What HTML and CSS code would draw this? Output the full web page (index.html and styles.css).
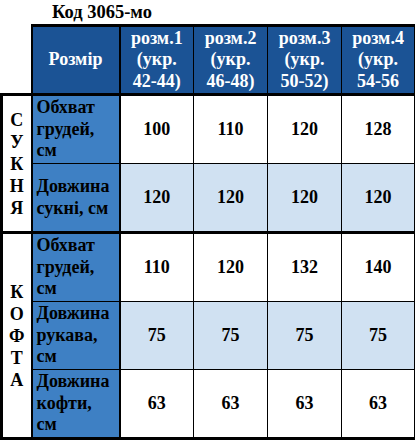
FILE: index.html
```html
<!DOCTYPE html>
<html lang="uk">
<head>
<meta charset="utf-8">
<title>Код 3065-мо</title>
<link rel="stylesheet" href="styles.css">
</head>
<body>
<div class="title">Код 3065-мо</div>
<table class="sizes">
  <colgroup>
    <col class="c-sec">
    <col class="c-lab">
    <col class="c-val">
    <col class="c-val">
    <col class="c-val">
    <col class="c-val">
  </colgroup>
  <tr class="head">
    <td class="corner"></td>
    <th class="h-first">Розмір</th>
    <th>розм.1<br>(укр.<br>42-44)</th>
    <th>розм.2<br>(укр.<br>46-48)</th>
    <th>розм.3<br>(укр.<br>50-52)</th>
    <th class="h-last">розм.4<br>(укр.<br>54-56</th>
  </tr>
  <tr class="grp-top">
    <td class="sec" rowspan="2">С<br>У<br>К<br>Н<br>Я</td>
    <td class="lab">Обхват<br>грудей,<br>см</td>
    <td class="val">100</td>
    <td class="val">110</td>
    <td class="val">120</td>
    <td class="val last">128</td>
  </tr>
  <tr class="alt">
    <td class="lab">Довжина<br>сукні, см</td>
    <td class="val">120</td>
    <td class="val">120</td>
    <td class="val">120</td>
    <td class="val last">120</td>
  </tr>
  <tr class="grp-top">
    <td class="sec sec-bottom" rowspan="3">К<br>О<br>Ф<br>Т<br>А</td>
    <td class="lab">Обхват<br>грудей,<br>см</td>
    <td class="val">110</td>
    <td class="val">120</td>
    <td class="val">132</td>
    <td class="val last">140</td>
  </tr>
  <tr class="alt">
    <td class="lab">Довжина<br>рукава,<br>см</td>
    <td class="val">75</td>
    <td class="val">75</td>
    <td class="val">75</td>
    <td class="val last">75</td>
  </tr>
  <tr class="bottom">
    <td class="lab">Довжина<br>кофти,<br>см</td>
    <td class="val">63</td>
    <td class="val">63</td>
    <td class="val">63</td>
    <td class="val last">63</td>
  </tr>
</table>
</body>
</html>
```

FILE: styles.css
```css
html, body {
  margin: 0;
  padding: 0;
  background: #ffffff;
}

body {
  font-family: "Liberation Serif", "Times New Roman", serif;
  font-weight: bold;
  color: #000000;
  font-size: 18px;
}

.title {
  height: 24px;
  line-height: 24px;
  padding-left: 52px;
  font-size: 18.5px;
}

.sizes {
  border-collapse: collapse;
  table-layout: fixed;
  width: 414px;
}

.c-sec { width: 30px; }
.c-lab { width: 88px; }
.c-val { width: 74px; }

.sizes td,
.sizes th {
  padding: 0;
  border: 1px solid #000;
  font-size: 18px;
  line-height: 21.5px;
  font-weight: bold;
}

.sizes .head th {
  height: 66px;
  background: #1b5395;
  color: #ffffff;
  text-align: center;
  border-top: 3px solid #000;
  border-bottom: 2px solid #000;
}

.sizes .head .h-first {
  border-left: 2px solid #000;
  border-right: 2px solid #000;
}

.sizes .head .h-last {
  border-right: 3px solid #000;
}

.sizes .head .corner {
  border: none;
  border-bottom: 3px solid #000;
  background: #ffffff;
}

.sizes .sec {
  text-align: center;
  vertical-align: middle;
  background: #ffffff;
  border-left: 3px solid #000;
  border-right: 2px solid #000;
  line-height: 22px;
}

.sizes .sec-bottom {
  border-bottom: 3px solid #000;
}

.sizes .lab {
  height: 67px;
  background: #3e80c4;
  text-align: left;
  vertical-align: middle;
  padding-left: 4px;
  border-right: 2px solid #000;
  border-left: 2px solid #000;
}

.sizes .val {
  text-align: center;
  vertical-align: middle;
  background: #ffffff;
}

.sizes .alt .val {
  background: #d0e1f2;
}

.sizes .val.last {
  border-right: 3px solid #000;
}

.sizes .grp-top td {
  border-top: 3px solid #000;
}

.sizes .bottom td {
  border-bottom: 3px solid #000;
}
```
